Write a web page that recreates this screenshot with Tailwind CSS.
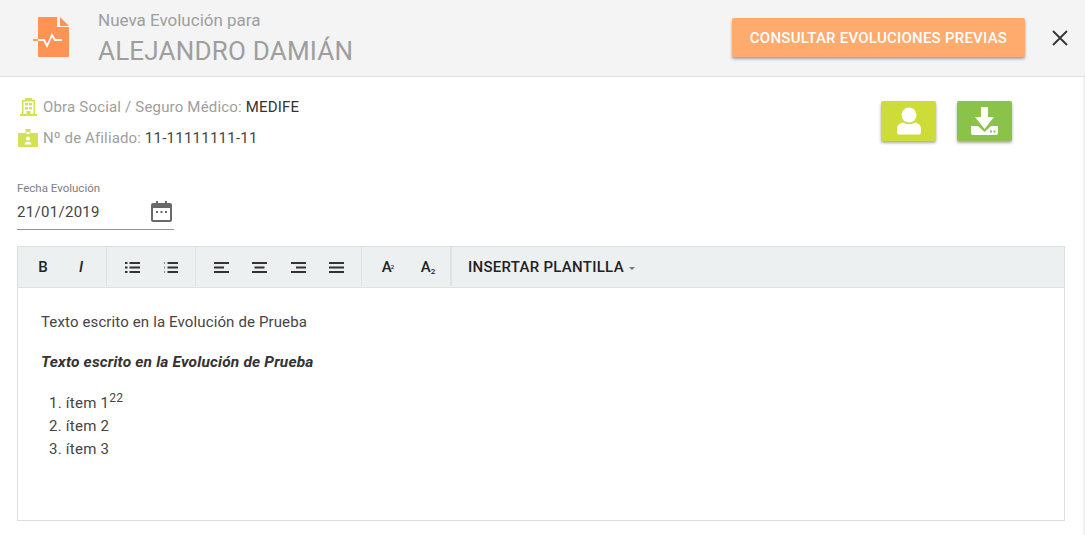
<!DOCTYPE html>
<html lang="es">
<head>
  <meta charset="UTF-8">
  <title>Nueva Evolución</title>
  <script src="https://cdn.jsdelivr.net/npm/@tailwindcss/browser@4"></script>
</head>
<body class="h-[535px] w-[1085px] overflow-hidden bg-white font-['Roboto',sans-serif]">

  <!-- Header -->
  <header class="flex h-[77px] items-center border-b border-[#e0e0e0] bg-[#f4f4f4]">
    <svg class="mb-[1px] ml-[33px] h-[41px] w-[37px]" viewBox="0 0 37 41">
      <path fill="#ff9355" d="M6 0h18v10h12v29a1 1 0 0 1-1 1h-29a1 1 0 0 1-1-1v-38a1 1 0 0 1 1-1z"/>
      <path fill="#ff9355" d="M27 0l9 9h-9z"/>
      <path fill="none" stroke="#ff9355" stroke-width="1.800" d="M0 23h5"/>
      <path fill="none" stroke="#fff" stroke-width="1.800" d="M5 23h6l3 6 5-11 3 5h7"/>
    </svg>
    <div class="mb-[1px] ml-[28px] flex-1 text-[#9e9e9e]">
      <div class="text-[17px] leading-[20px]">Nueva Evolución para</div>
      <div class="mt-[6px] text-[26px] leading-[30px] tracking-[0.2px]">ALEJANDRO DAMIÁN</div>
    </div>
    <button class="mb-[1px] h-[39px] w-[293px] rounded-[2px] bg-[#ffab6e] pt-[2px] text-[15px] font-medium tracking-[0.24px] text-white uppercase shadow-[0_2px_3px_rgba(0,0,0,0.35)]">Consultar evoluciones previas</button>
    <svg class="mr-[16px] ml-[26px] h-[18px] w-[18px]" viewBox="0 0 18 18">
      <path fill="none" stroke="#333" stroke-width="1.800" d="M2 2l14 14M16 2l-14 14"/>
    </svg>
  </header>

  <main class="h-[458px] border-r-2 border-[#f1f1f1] px-[17px]">
    <!-- Datos del paciente -->
    <section class="flex h-[76px] justify-between">
      <div class="pt-[19px] text-[15px] leading-[22px] tracking-[0.18px] text-[#9e9e9e]">
        <div class="flex items-center gap-[6px] pl-[3px]">
          <svg class="h-[18px] w-[17px]" viewBox="0 0 17 18">
            <path fill="#d4e157" d="M5 0h7v2h3v14h2v2h-17v-2h2v-14h3z"/>
            <path fill="#fff" d="M3.500 3.500h10v12.500h-10z"/>
            <path fill="#d4e157" d="M7.500 1h2v1.500h-2zM5 5h3v2.500h-3zM9 5h3v2.500h-3zM5 9h3v2.500h-3zM9 9h3v2.500h-3zM6.500 13h4v3h-4z"/>
          </svg>
          <span>Obra Social / Seguro Médico: <span class="text-[#333]">MEDIFE</span></span>
        </div>
        <div class="mt-[9px] flex items-center gap-[5px] pl-[1px]">
          <svg class="h-[18px] w-[20px]" viewBox="0 0 20 18">
            <path fill="#d4e157" d="M1 4h6.500v-4h5v4h6.500a1 1 0 0 1 1 1v12a1 1 0 0 1-1 1h-18a1 1 0 0 1-1-1v-12a1 1 0 0 1 1-1z"/>
            <path fill="#fff" d="M8.500 3h3v2h-3z"/>
            <circle cx="10" cy="9.500" r="2" fill="#fff"/>
            <path fill="#fff" d="M6.500 15.500c0-2 1.500-3 3.500-3s3.500 1 3.500 3z"/>
          </svg>
          <span class="tracking-[0.12px]">Nº de Afiliado: <span class="tracking-[0.25px] text-[#444]">11-11111111-11</span></span>
        </div>
      </div>
      <div class="mr-[54px] flex gap-[21px] pt-[24px]">
        <button class="flex h-[40px] w-[55px] items-center justify-center rounded-[2px] bg-[#cddc39] shadow-[0_2px_3px_rgba(0,0,0,0.35)]">
          <svg class="h-[28px] w-[24px]" viewBox="0 0 24 28">
            <circle cx="12" cy="8" r="7.500" fill="#fff"/>
            <path fill="#fff" d="M0 22c0-4 3-6 6-6.500 3.500 2 8.500 2 12 0 3 .5 6 2.500 6 6.500v3.500a2 2 0 0 1-2 2h-20a2 2 0 0 1-2-2z"/>
          </svg>
        </button>
        <button class="flex h-[40px] w-[55px] items-center justify-center rounded-[2px] bg-[#8bc34a] shadow-[0_2px_3px_rgba(0,0,0,0.35)]">
          <svg class="h-[28px] w-[27px]" viewBox="0 0 27 28">
            <path fill="#fff" d="M10 0h7v10h6l-9.500 12-9.500-12h6z"/>
            <path fill="#fff" d="M0 19h7l6.500 6 6.500-6h7v7a2 2 0 0 1-2 2h-23a2 2 0 0 1-2-2z"/>
            <path fill="#8bc34a" d="M19 23.500h2v2h-2zM22.500 23.500h2v2h-2z"/>
          </svg>
        </button>
      </div>
    </section>

    <!-- Fecha -->
    <section class="relative mt-[28px] h-[49px] w-[157px] border-b border-[#949494]">
      <label class="block text-[11.500px] leading-[14px] text-[#808080]">Fecha Evolución</label>
      <div class="mt-[7px] text-[15px] leading-[20px] tracking-[0.3px] text-[#444]">21/01/2019</div>
      <svg class="absolute top-[20px] right-[2px] h-[21px] w-[21px]" viewBox="0 0 21 21">
        <path fill="#696969" d="M5 0h2v2h7v-2h2v2h3a2 2 0 0 1 2 2v15a2 2 0 0 1-2 2h-17a2 2 0 0 1-2-2v-15a2 2 0 0 1 2-2h3z"/>
        <path fill="#fff" d="M2 7h17v12h-17z"/>
        <path fill="#696969" d="M5 10h2v2h-2zM9.500 10h2v2h-2zM14 10h2v2h-2z"/>
      </svg>
    </section>

    <!-- Editor -->
    <section class="mt-[16px] h-[275px] w-[1048px] border border-[#dcdfe0]">
      <div class="flex h-[41px] border-b border-[#dee2e3] bg-[#ecf0f1] text-[#222]">
        <div class="flex h-[39px] border-r border-[#dee2e3] px-[6px] pt-[1px]">
          <button class="w-[38px] text-[15px] font-medium">B</button>
          <button class="w-[38px] text-[15px] font-medium italic">I</button>
        </div>
        <div class="flex h-[39px] border-r border-[#dee2e3] px-[6px] pt-[1px]">
          <button class="flex w-[38px] items-center justify-center">
            <svg class="h-[11px] w-[15px]" viewBox="0 0 15 11"><path fill="#333" d="M0 0h2.500v2h-2.500zM0 4.500h2.500v2h-2.500zM0 9h2.500v2h-2.500zM4.500 0h10.500v2h-10.500zM4.500 4.500h10.500v2h-10.500zM4.500 9h10.500v2h-10.500z"/></svg>
          </button>
          <button class="flex w-[38px] items-center justify-center">
            <svg class="h-[11px] w-[15px]" viewBox="0 0 15 11"><path fill="#888" d="M1 0h1v2h-1zM1 4.500h1v2h-1zM1 9h1v2h-1z"/><path fill="#333" d="M4.500 0h10.500v2h-10.500zM4.500 4.500h10.500v2h-10.500zM4.500 9h10.500v2h-10.500z"/></svg>
          </button>
        </div>
        <div class="flex h-[39px] border-r border-[#dee2e3] px-[6px] pt-[1px]">
          <button class="flex w-[38px] items-center justify-center">
            <svg class="h-[11px] w-[15px]" viewBox="0 0 15 11"><path fill="#333" d="M0 0h15v2h-15zM0 4.500h10v2h-10zM0 9h15v2h-15z"/></svg>
          </button>
          <button class="flex w-[38px] items-center justify-center">
            <svg class="h-[11px] w-[15px]" viewBox="0 0 15 11"><path fill="#333" d="M0 0h15v2h-15zM2.500 4.500h10v2h-10zM0 9h15v2h-15z"/></svg>
          </button>
          <button class="ml-[1px] flex w-[38px] items-center justify-center">
            <svg class="h-[11px] w-[15px]" viewBox="0 0 15 11"><path fill="#333" d="M0 0h15v2h-15zM5 4.500h10v2h-10zM0 9h15v2h-15z"/></svg>
          </button>
          <button class="flex w-[38px] items-center justify-center">
            <svg class="h-[11px] w-[15px]" viewBox="0 0 15 11"><path fill="#333" d="M0 0h15v2h-15zM0 4.500h15v2h-15zM0 9h15v2h-15z"/></svg>
          </button>
        </div>
        <div class="flex h-[39px] border-r-2 border-[#dee2e3] pt-[1px] pr-[3px] pl-[7px]">
          <button class="w-[38px] text-[15px] font-medium">A<sup class="-ml-[1px] text-[6px]">2</sup></button>
          <button class="ml-[2px] w-[38px] text-[15px] font-medium">A<sub class="text-[8px]">2</sub></button>
        </div>
        <button class="ml-[16px] flex h-[39px] items-center pt-[1px] text-[15px] font-medium tracking-[0.28px] text-[#222]">INSERTAR PLANTILLA
          <span class="mt-[2px] ml-[5px] border-x-[3px] border-t-[3px] border-x-transparent border-t-[#777]"></span>
        </button>
      </div>
      <div class="px-[23px] pt-[24px] text-[15px] tracking-[0.13px] text-[#444]">
        <p class="leading-[20px]">Texto escrito en la Evolución de Prueba</p>
        <p class="mt-[20px] text-[15.500px] leading-[20px] font-bold tracking-[0.17px] text-[#333] italic">Texto escrito en la Evolución de Prueba</p>
        <ol class="mt-[20px] list-inside list-decimal pl-[8px] leading-[23px] tracking-[0.25px]">
          <li>ítem 1<sup class="text-[12px]">22</sup></li>
          <li>ítem 2</li>
          <li>ítem 3</li>
        </ol>
      </div>
    </section>
  </main>
</body>
</html>
